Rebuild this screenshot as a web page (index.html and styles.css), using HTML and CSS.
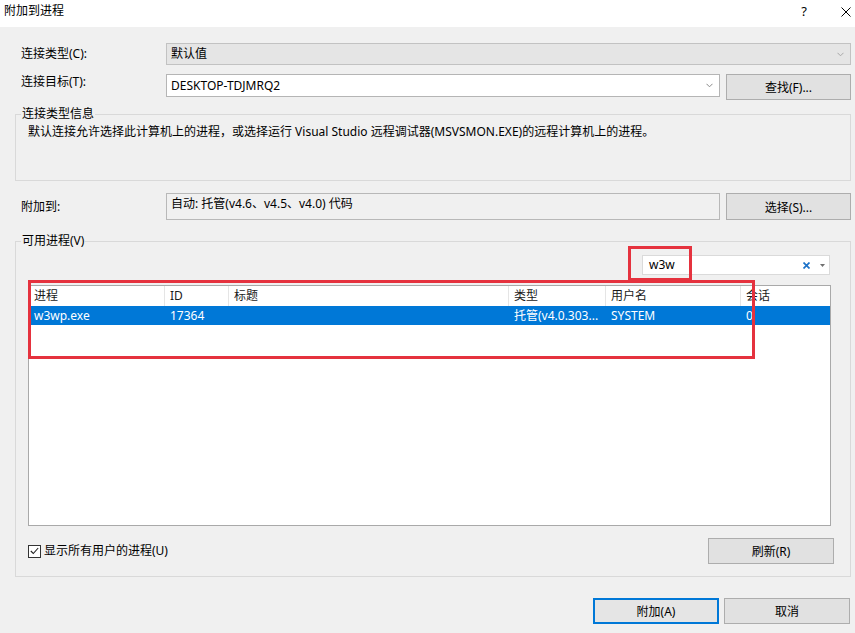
FILE: index.html
```html
<!DOCTYPE html>
<html lang="zh-CN">
<head>
    <meta charset="UTF-8">
    <meta name="viewport" content="width=device-width, initial-scale=1.0">
    <title>附加到进程</title>
    <link rel="stylesheet" href="styles.css">
</head>
<body>
    <div class="dialog">
        <div class="titlebar">
            <span class="title">附加到进程</span>
            <div class="title-buttons">
                <span class="help">?</span>
                <svg class="close" width="10" height="10" viewBox="0 0 10 10">
                    <path d="M0.5 0.5 L9.5 9.5 M9.5 0.5 L0.5 9.5" stroke="#000" stroke-width="1" fill="none"/>
                </svg>
            </div>
        </div>

        <div class="main">
            <div class="form-row row-type">
                <label class="field-label">连接类型(C):</label>
                <div class="combo combo-disabled">
                    <span>默认值</span>
                    <svg class="chevron" width="7" height="5" viewBox="0 0 7 5"><path d="M0.5 0.8 L3.5 3.8 L6.5 0.8" stroke="#a8a8a8" fill="none"/></svg>
                </div>
            </div>

            <div class="form-row row-target">
                <label class="field-label">连接目标(T):</label>
                <div class="combo combo-edit">
                    <span>DESKTOP-TDJMRQ2</span>
                    <svg class="chevron" width="7" height="5" viewBox="0 0 7 5"><path d="M0.5 0.8 L3.5 3.8 L6.5 0.8" stroke="#8a8a8a" fill="none"/></svg>
                </div>
                <button class="btn btn-side">查找(F)...</button>
            </div>

            <fieldset class="group info-group">
                <legend>连接类型信息</legend>
                <p class="info-text">默认连接允许选择此计算机上的进程，或选择运行 Visual Studio 远程调试器(MSVSMON.EXE)的远程计算机上的进程。</p>
            </fieldset>

            <div class="form-row row-attach">
                <label class="field-label">附加到:</label>
                <div class="readonly-field">自动: 托管(v4.6、v4.5、v4.0) 代码</div>
                <button class="btn btn-side">选择(S)...</button>
            </div>

            <fieldset class="group process-group">
                <legend>可用进程(V)</legend>
                <div class="search-row">
                    <div class="search-box">
                        <span class="search-text">w3w</span>
                        <svg class="search-clear" width="7" height="7" viewBox="0 0 7 7"><path d="M0.5 0.5 L6.5 6.5 M6.5 0.5 L0.5 6.5" stroke="#1c72c8" stroke-width="1.7" fill="none"/></svg>
                        <svg class="search-drop" width="5" height="3" viewBox="0 0 5 3"><path d="M0 0 L5 0 L2.5 3 Z" fill="#707070"/></svg>
                    </div>
                </div>

                <div class="process-list">
                    <div class="list-row list-header">
                        <span>进程</span>
                        <span>ID</span>
                        <span>标题</span>
                        <span>类型</span>
                        <span>用户名</span>
                        <span>会话</span>
                    </div>
                    <div class="list-row selected">
                        <span>w3wp.exe</span>
                        <span>17364</span>
                        <span></span>
                        <span>托管(v4.0.303...</span>
                        <span>SYSTEM</span>
                        <span>0</span>
                    </div>
                </div>

                <div class="list-footer">
                    <label class="check">
                        <span class="checkbox">
                            <svg width="9" height="8" viewBox="0 0 9 8"><path d="M0.8 4 L3.3 6.5 L8.2 1" stroke="#222" stroke-width="1.1" fill="none"/></svg>
                        </span>
                        显示所有用户的进程(U)
                    </label>
                    <button class="btn btn-refresh">刷新(R)</button>
                </div>
            </fieldset>

            <div class="dialog-buttons">
                <button class="btn btn-default">附加(A)</button>
                <button class="btn">取消</button>
            </div>
        </div>

        <!-- red annotation boxes drawn on top of the screenshot -->
        <div class="mark mark-search"></div>
        <div class="mark mark-list"></div>
    </div>
</body>
</html>
```

FILE: styles.css
```css
body {
    margin: 0;
    background-color: #f0f0f0;
    font-family: "Noto Sans", "Noto Sans CJK SC", sans-serif;
    font-size: 12px;
    line-height: 16px;
    color: #000;
}

.dialog {
    position: relative;
    width: 855px;
    height: 633px;
    overflow: hidden;
    background-color: #f0f0f0;
}

.titlebar {
    height: 27px;
    box-sizing: border-box;
    padding: 3px 4px 0 4px;
    background-color: #fff;
    display: flex;
    justify-content: space-between;
    align-items: flex-start;
}

.title-buttons {
    display: flex;
    align-items: center;
    gap: 34px;
}

.help {
    font-size: 13px;
}

.close {
    margin-top: 2px;
}

.main {
    padding: 16px 4px 0 15px;
}

.form-row {
    display: flex;
    align-items: center;
    gap: 6px;
    padding-left: 6px;
}

.field-label {
    width: 139px;
    flex-shrink: 0;
}

.combo {
    flex: 1;
    box-sizing: border-box;
    display: flex;
    align-items: center;
    justify-content: space-between;
    padding: 0 6px 0 4px;
}

.combo-disabled {
    height: 22px;
    background-color: #e5e5e5;
    border: 1px solid #c2c2c2;
}

.combo-edit {
    height: 23px;
    align-self: flex-start;
    background-color: #fff;
    border: 1px solid #b5b5b5;
}

.row-target {
    margin-top: 9px;
    align-items: flex-start;
}

.btn {
    font-family: inherit;
    font-size: 12px;
    color: #000;
    height: 26px;
    background-color: #e1e1e1;
    border: 1px solid #adadad;
    padding: 0;
}

.btn-side {
    width: 125px;
    flex-shrink: 0;
}

.group {
    margin: 0;
    border: 1px solid #d9d9d9;
}

.group legend {
    padding: 0 1px;
    margin-left: -7px;
}

.info-group {
    margin-top: 6px;
    padding: 2px 12px 40px 12px;
}

.info-text {
    margin: 0;
}

.row-attach {
    margin-top: 12px;
}

.row-attach .btn {
    height: 27px;
}

.readonly-field {
    flex: 1;
    box-sizing: border-box;
    height: 27px;
    padding: 2px 4px 0 4px;
    background-color: #f0f0f0;
    border: 1px solid #b8b8b8;
}

.process-group {
    margin-top: 13px;
    padding: 6px 19px 12px 12px;
}

.search-row {
    display: flex;
    justify-content: flex-end;
}

.search-box {
    width: 188px;
    height: 20px;
    box-sizing: border-box;
    margin-right: 1px;
    background-color: #fff;
    border: 1px solid #dadada;
    display: flex;
    align-items: center;
    padding: 0 4px 0 6px;
}

.search-text {
    flex: 1;
}

.search-clear {
    margin-right: 10px;
}

.process-list {
    margin-top: 10px;
    height: 241px;
    box-sizing: border-box;
    background-color: #fff;
    border: 1px solid #a9a9a9;
}

.list-row {
    display: grid;
    grid-template-columns: 136px 64px 280px 97px 135px 1fr;
}

.list-row span {
    padding-left: 5px;
    white-space: nowrap;
    overflow: hidden;
}

.list-header {
    height: 20px;
    align-items: center;
    color: #1a1a1a;
}

.list-header span {
    height: 20px;
    line-height: 20px;
    border-right: 1px solid #e5e5e5;
}

.list-header span:last-child {
    border-right: none;
}

.selected {
    height: 19px;
    line-height: 19px;
    background-color: #0078d7;
    color: #fff;
}

.list-footer {
    margin-top: 12px;
    margin-right: -3px;
    display: flex;
    justify-content: space-between;
    align-items: center;
}

.check {
    display: flex;
    align-items: center;
    gap: 3px;
}

.checkbox {
    width: 13px;
    height: 13px;
    box-sizing: border-box;
    border: 1px solid #333;
    background-color: #fff;
    display: flex;
    align-items: center;
    justify-content: center;
}

.btn-refresh {
    width: 126px;
}

.dialog-buttons {
    margin-top: 21px;
    margin-right: 1px;
    display: flex;
    justify-content: flex-end;
    gap: 5px;
}

.dialog-buttons .btn {
    width: 126px;
}

.btn-default {
    border: 1px solid #0078d7;
    box-shadow: inset 0 0 0 1px #0078d7;
    background-color: #e5e5e5;
}

.mark {
    position: absolute;
    box-sizing: border-box;
    border: 3px solid #e5323e;
}

.mark-search {
    left: 628px;
    top: 246px;
    width: 64px;
    height: 35px;
}

.mark-list {
    left: 28px;
    top: 280px;
    width: 727px;
    height: 79px;
}
```
